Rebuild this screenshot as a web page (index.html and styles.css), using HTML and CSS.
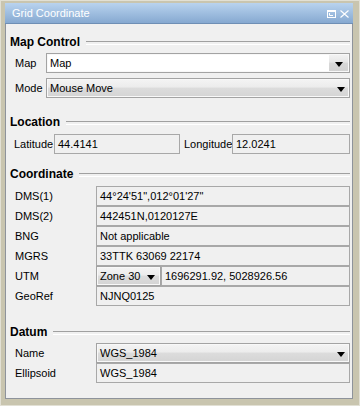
FILE: index.html
```html
<!DOCTYPE html>
<html>
<head>
<meta charset="utf-8">
<link rel="stylesheet" href="styles.css">
</head>
<body>
<div class="window">
  <div class="titlebar">
    <span class="title">Grid Coordinate</span>
    <span class="tb-icons">
      <svg width="9" height="8" viewBox="0 0 9 8"><rect x="0.5" y="0.5" width="8" height="7" fill="none" stroke="#fff"/><line x1="0" y1="1.5" x2="9" y2="1.5" stroke="#fff"/><polyline points="2.5,3 2.5,5.5 6,5.5" fill="none" stroke="#fff"/></svg>
      <svg width="9" height="8" viewBox="0 0 9 8"><path d="M0.5 0.5 L8.5 7.5 M8.5 0.5 L0.5 7.5" stroke="#fff" stroke-width="1.1" fill="none"/></svg>
    </span>
  </div>
  <div class="content">
    <div class="heading h-map"><span>Map Control</span></div>
    <div class="row r-map">
      <span class="lbl lbl-map">Map</span>
      <div class="combo editable"><span class="val">Map</span><span class="btn"><i class="arrow"></i></span></div>
    </div>
    <div class="row r-mode">
      <span class="lbl lbl-map">Mode</span>
      <div class="combo"><span class="val">Mouse Move</span><i class="arrow"></i></div>
    </div>

    <div class="heading h-loc"><span>Location</span></div>
    <div class="row r-loc">
      <span class="lbl lbl-lat">Latitude</span>
      <div class="box lat">44.4141</div>
      <span class="lbl lbl-lon">Longitude</span>
      <div class="box lon">12.0241</div>
    </div>

    <div class="heading h-coord"><span>Coordinate</span></div>
    <div class="stack">
      <div class="row"><span class="lbl lbl-c">DMS(1)</span><div class="box grow">44°24'51",012°01'27"</div></div>
      <div class="row"><span class="lbl lbl-c">DMS(2)</span><div class="box grow">442451N,0120127E</div></div>
      <div class="row"><span class="lbl lbl-c">BNG</span><div class="box grow">Not applicable</div></div>
      <div class="row"><span class="lbl lbl-c">MGRS</span><div class="box grow">33TTK 63069 22174</div></div>
      <div class="row"><span class="lbl lbl-c">UTM</span><div class="combo zone"><span class="val">Zone 30</span><i class="arrow"></i></div><div class="box grow">1696291.92, 5028926.56</div></div>
      <div class="row"><span class="lbl lbl-c">GeoRef</span><div class="box grow">NJNQ0125</div></div>
    </div>

    <div class="heading h-datum"><span>Datum</span></div>
    <div class="stack">
      <div class="row"><span class="lbl lbl-c">Name</span><div class="combo grow"><span class="val">WGS_1984</span><i class="arrow"></i></div></div>
      <div class="row"><span class="lbl lbl-c">Ellipsoid</span><div class="box grow">WGS_1984</div></div>
    </div>
  </div>
</div>
</body>
</html>
```
FILE: styles.css
```css
* { box-sizing: border-box; }
html, body { margin: 0; padding: 0; }
body {
  font-family: "Liberation Sans", Arial, sans-serif;
  font-size: 11px;
  color: #000;
  background: #cdc9b4;
}
.window {
  width: 360px;
  height: 406px;
  border: 1px solid #e2e0d4;
  background: #c9c5af;
  padding: 2px 6px 6px 4px;
  display: flex;
  flex-direction: column;
}
.titlebar {
  height: 21px;
  flex: none;
  background: linear-gradient(#b9d3ef, #86a9d1);
  border-bottom: 1px solid #6f8fb5;
  display: flex;
  align-items: center;
  padding: 0 4px 0 7px;
}
.title {
  color: #fff;
  font-size: 11px;
  flex: 1;
}
.tb-icons { display: flex; gap: 4px; align-items: center; margin-top: 1px; }
.tb-icons svg { display: block; }
.content {
  flex: 1;
  background: #f0f0f0;
  border: 1px solid #8e939b;
  border-top: none;
  padding: 0 2px 0 4px;
  display: flex;
  flex-direction: column;
}
.heading {
  height: 16px;
  display: flex;
  align-items: center;
  font-weight: bold;
  font-size: 12px;
  color: #000;
}
.heading::after {
  content: "";
  flex: 1;
  height: 2px;
  margin-left: 6px;
  margin-top: 2px;
  border-top: 1px solid #a0a0a0;
  border-bottom: 1px solid #fff;
}
.h-map { margin-top: 10px; }
.h-loc { margin-top: 16px; }
.h-coord { margin-top: 12px; }
.h-datum { margin-top: 18px; }
.row {
  display: flex;
  align-items: center;
  height: 20px;
}
.r-map { margin-top: 3px; }
.r-mode { margin-top: 5px; }
.r-loc { margin-top: 4px; }
.stack { margin-top: 4px; }
.h-datum + .stack { margin-top: 3px; }
.lbl { padding-left: 5px; white-space: nowrap; }
.lbl-map { width: 36px; }
.lbl-lat { width: 44px; padding-left: 4px; }
.lbl-lon { width: 52px; padding-left: 4px; }
.lbl-c { width: 86px; }
.box {
  height: 20px;
  border: 1px solid #a8a8a8;
  background: #f0f0f0;
  padding-left: 3px;
  display: flex;
  align-items: center;
  white-space: nowrap;
}
.lat { width: 126px; }
.lon { flex: 1; }
.grow { flex: 1; }
.combo {
  height: 20px;
  border: 1px solid #a3a3a3;
  box-shadow: inset 0 0 0 1px #f8f8f8;
  background: linear-gradient(#f4f4f4 0%, #ececec 45%, #dcdcdc 50%, #d4d4d4 100%);
  display: flex;
  align-items: center;
  padding-left: 3px;
  padding-right: 4px;
  flex: 1;
}
.combo .val { flex: 1; white-space: nowrap; }
.combo.editable {
  background: #fff;
  padding-right: 1px;
}
.combo .btn {
  width: 19px;
  height: 16px;
  background: linear-gradient(#f2f2f2 0%, #e6e6e6 45%, #d8d8d8 50%, #d2d2d2 100%);
  display: flex;
  align-items: center;
  justify-content: center;
}
.arrow {
  display: block;
  width: 0;
  height: 0;
  border-left: 4px solid transparent;
  border-right: 4px solid transparent;
  border-top: 5px solid #000;
  margin-top: 2px;
}
.zone { flex: none; width: 65px; padding-right: 5px; }
```
